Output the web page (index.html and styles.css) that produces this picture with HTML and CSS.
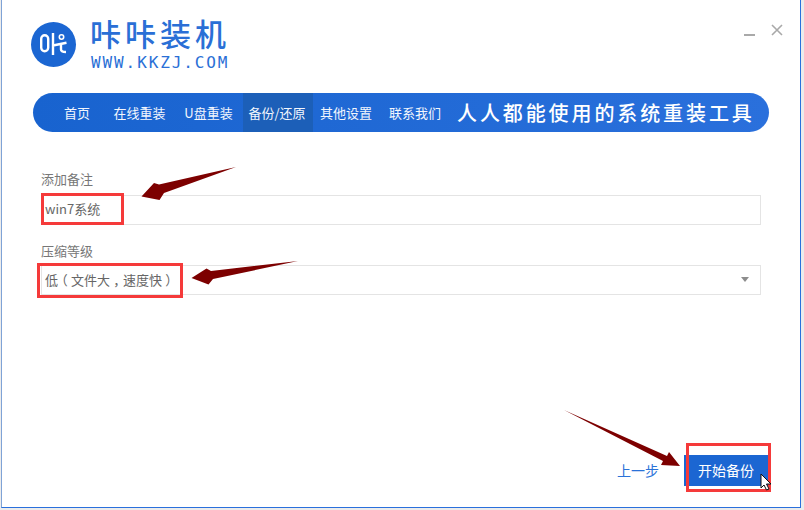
FILE: index.html
```html
<!DOCTYPE html>
<html lang="zh-CN">
<head>
<meta charset="utf-8">
<title>咔咔装机</title>
<link rel="stylesheet" href="styles.css">
</head>
<body>
<div class="window">
  <header class="top">
    <svg class="logo" viewBox="0 0 46 46" aria-hidden="true">
      <circle cx="22.5" cy="22.5" r="22.5" fill="#1b66d2"/>
      <rect x="10.2" y="13.2" width="7" height="16" rx="3.5" fill="none" stroke="#fff" stroke-width="2.4"/>
      <path d="M22 11V33M22 23.5L35.5 20.8M30 22.5V27.5Q30 30 35 30" fill="none" stroke="#fff" stroke-width="2.4"/>
      <circle cx="30.5" cy="15" r="2.2" fill="none" stroke="#fff" stroke-width="1.6"/>
    </svg>
    <div class="brand">
      <div class="brand-name">咔咔装机</div>
      <div class="brand-url">WWW.KKZJ.COM</div>
    </div>
    <div class="win-controls">
      <span class="win-min"></span>
      <svg class="win-close" viewBox="0 0 12 12" aria-hidden="true"><path d="M1 1L11 11M11 1L1 11" stroke="#a9a9a9" stroke-width="1.6" fill="none"/></svg>
    </div>
  </header>
  <nav class="nav">
    <a class="nav-item w-home">首页</a>
    <a class="nav-item w-online">在线重装</a>
    <a class="nav-item w-usb">U盘重装</a>
    <a class="nav-item w-backup active">备份/还原</a>
    <a class="nav-item w-other">其他设置</a>
    <a class="nav-item w-contact">联系我们</a>
    <span class="slogan">人人都能使用的系统重装工具</span>
  </nav>
  <main class="form">
    <label class="field-label">添加备注</label>
    <div class="field">win7系统</div>
    <label class="field-label second">压缩等级</label>
    <div class="field select">低<span class="punct">（</span>文件大<span class="punct">，</span>速度快<span class="punct">）</span><span class="caret"></span></div>
  </main>
  <footer class="actions">
    <a class="prev">上一步</a>
    <button class="start">开始备份</button>
  </footer>
</div>

<svg class="overlay" viewBox="0 0 804 510" aria-hidden="true">
  <path fill="#7d0000" d="M236 167L164 193L159.5 200L141.5 196.5L154 183L159 184.5Z"/>
  <path fill="#7d0000" d="M298 261L213 279L208.5 284.5L191.5 278L206.5 268.5L211 271Z"/>
  <path fill="#7d0000" d="M564 410L667 456L669 452L680 466L661 465L663 461Z"/>
</svg>
<div class="mark mark-a"></div>
<div class="mark mark-b"></div>
<div class="mark mark-c"></div>
<svg class="cursor" viewBox="0 0 12 18" aria-hidden="true"><path d="M1 1V15L4 12L6.5 17L9 16L6.5 11H11Z" fill="#fff" stroke="#111" stroke-width="1"/></svg>
</body>
</html>
```
FILE: styles.css
```css
* { box-sizing: border-box; }
html, body { margin: 0; height: 100%; }
body {
  width: 804px; height: 510px; overflow: hidden; background: #ececec; position: relative;
  font-family: "Liberation Sans", "Noto Sans CJK SC", sans-serif;
}
.window {
  width: 800px; height: 508px; margin-left: 1px; background: #fff;
  border-left: 1px solid #7fa3d6; border-right: 1px solid #2a70dc; border-bottom: 1px solid #2a70dc;
  display: flex; flex-direction: column; padding: 0 31px;
}
.top { height: 93px; display: flex; align-items: flex-start; padding-top: 22px; flex-shrink: 0; }
.logo { width: 46px; height: 46px; flex-shrink: 0; margin-left: -2px; }
.brand { margin-left: 13px; margin-top: -3px; color: #2a6fd6; }
.brand-name { font: 500 31px/33px "Liberation Sans", "Noto Sans CJK SC", sans-serif; letter-spacing: 4px; white-space: nowrap; }
.brand-url { font: 400 16px/15px "DejaVu Sans Mono", monospace; letter-spacing: 1.9px; margin-top: 3px; margin-left: 1px; white-space: nowrap; }
.win-controls { margin-left: auto; margin-right: -14px; display: flex; align-items: center; gap: 16px; height: 14px; margin-top: 1px; }
.win-min { width: 11px; height: 2px; background: #a9a9a9; margin-top: 9px; }
.win-close { width: 12px; height: 12px; }
.nav {
  height: 39px; flex-shrink: 0; border-radius: 20px; display: flex; align-items: stretch; color: #fff;
  background: linear-gradient(90deg, #1863cf, #2a70dc);
  font: 400 13px/39px "Noto Sans CJK SC", sans-serif;
}
.nav-item { text-align: center; white-space: nowrap; color: #f2f6fd; }
.w-home { width: 72px; padding-left: 16px; }
.w-online { width: 69px; }
.w-usb { width: 69px; }
.w-backup { width: 70px; padding-right: 2px; }
.w-other { width: 66px; }
.w-contact { width: 72px; }
.active { background: #1c5fb8; }
.slogan { margin-left: 6px; font-size: 20px; font-weight: 500; letter-spacing: 2.9px; white-space: nowrap; color: #fff; }
.form { padding: 39px 8px 0 8px; color: #666; flex-shrink: 0; }
.field-label { display: block; font: 400 13px/16px "Noto Sans CJK SC", sans-serif; color: #777; }
.second { margin-top: 18px; }
.field {
  height: 30px; border: 1px solid #e4e4e4; margin-top: 8px; padding-left: 3px;
  font: 400 13px/26px "Noto Sans CJK SC", sans-serif; color: #666; position: relative;
  width: 720px;
}
.second + .field { margin-top: 6px; line-height: 28px; }
.punct { display: inline-block; width: 13px; text-align: center; font-feature-settings: "halt"; }
.caret { position: absolute; right: 11px; top: 11px; border: 4px solid transparent; border-top: 5px solid #8d8d8d; border-bottom: 0; }
.actions { margin-top: auto; height: 52px; display: flex; align-items: flex-start; justify-content: flex-end; flex-shrink: 0; }
.prev { font: 400 14px/30px "Noto Sans CJK SC", sans-serif; color: #2a72d8; margin-right: 25px; }
.start {
  width: 84px; height: 31px; border: 0; background: #1b66d2; color: #fff; padding: 0; margin-right: 1px;
  font: 400 14px/31px "Noto Sans CJK SC", sans-serif;
}
.overlay { position: absolute; left: 0; top: 0; width: 804px; height: 510px; pointer-events: none; }
.mark { position: absolute; border: 3px solid #f53a3a; }
.mark-a { left: 41px; top: 193px; width: 83px; height: 32px; }
.mark-b { left: 37px; top: 263px; width: 146px; height: 35px; }
.mark-c { left: 686px; top: 443px; width: 85px; height: 49px; }
.cursor { position: absolute; left: 760px; top: 473px; width: 12px; height: 18px; }
```
